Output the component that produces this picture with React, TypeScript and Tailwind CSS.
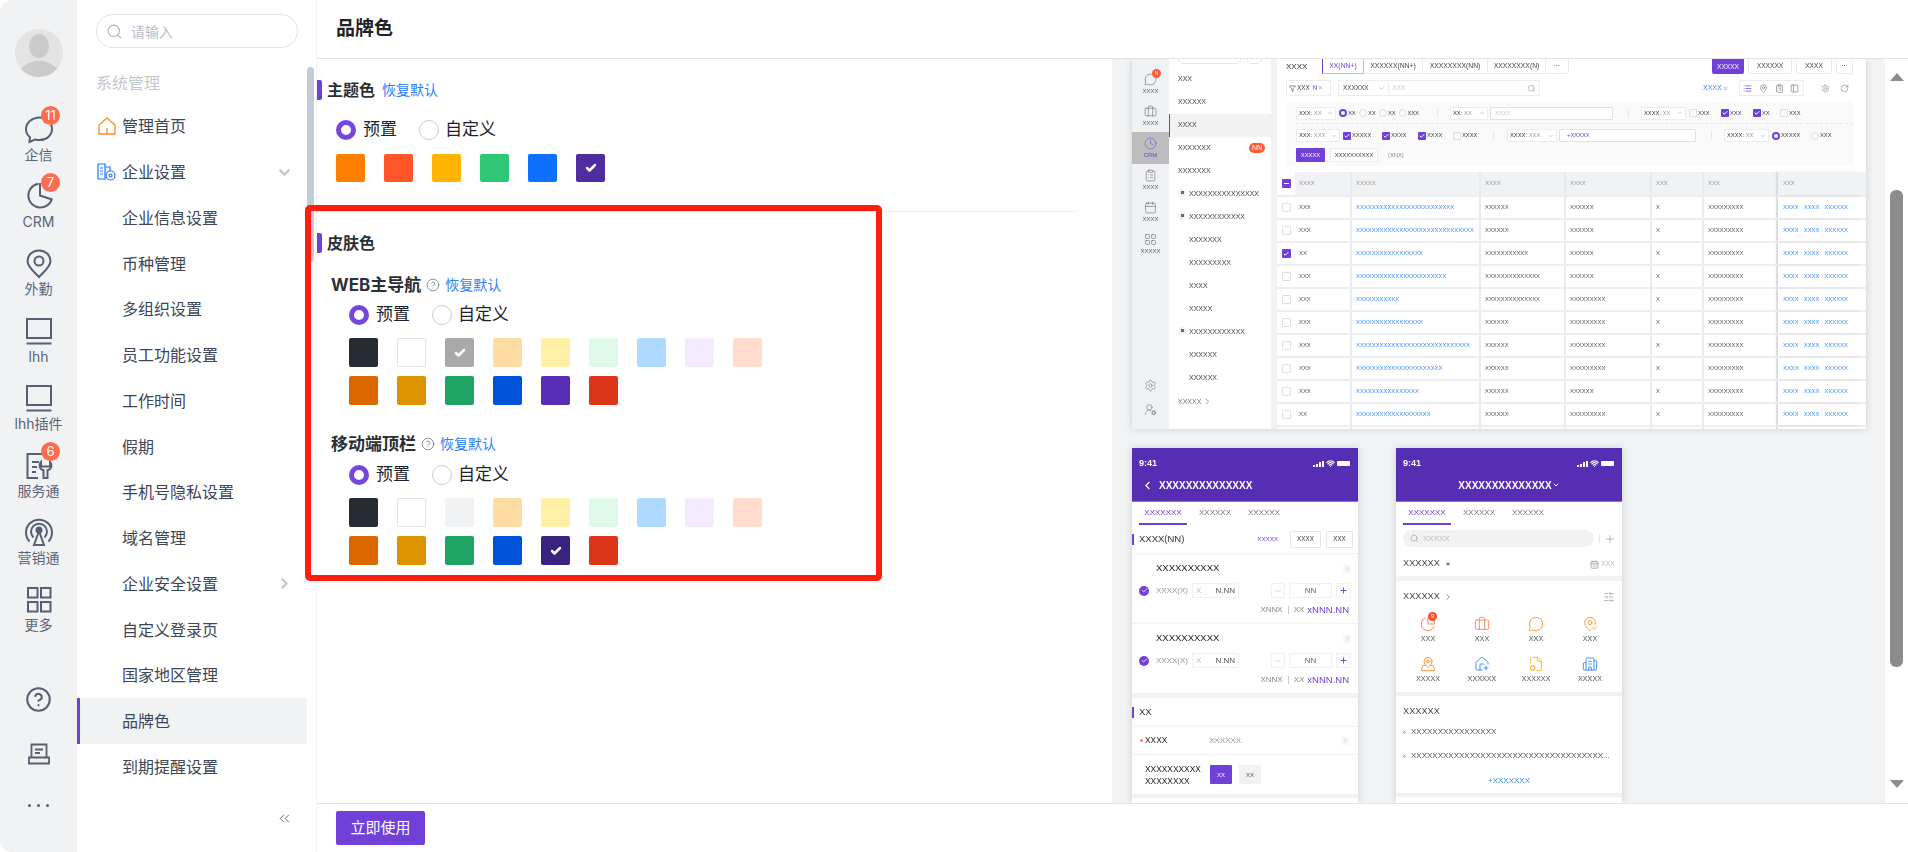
import {
  Briefcase, Building2, Calendar, CalendarDays, Check, ChartPie, ChevronDown, ChevronLeft, ChevronRight, ChevronsDown, ChevronsLeft,
  CircleHelp, ClipboardList, Clock, FileCog, Filter, HousePlus, LayoutGrid, List, MapPin, MapPinCheck, MapPinned,
  MessageCircle, Minus, PanelLeft, Plus, RotateCw, Search, Settings, SlidersHorizontal, UserRoundCog, Wifi,
} from 'lucide-react';

const railStroke = '#565f73';

function ChatIcon() {
  return (
    <svg width="30" height="30" viewBox="0 0 30 30" fill="none" stroke={railStroke} strokeWidth="2">
      <path d="M15.500 2.500C8.500 2.500 2 7.500 2 14c0 3.400 1.600 6.300 4 8.300l-.5 4.700 5.600-2.500c1.400.4 2.900.6 4.400.6 7 0 12.500-4.800 12.500-11C28 7.500 22.500 2.500 15.500 2.500z" />
    </svg>
  );
}
function PieIcon() {
  return (
    <svg width="30" height="30" viewBox="0 0 30 30" fill="none" stroke={railStroke} strokeWidth="2">
      <path d="M14.500 1.700a12 12 0 1 0 13.500 14.800" />
      <path d="M16 1v12.500l12 4" />
    </svg>
  );
}
function PinIcon() {
  return (
    <svg width="30" height="30" viewBox="0 0 30 30" fill="none" stroke={railStroke} strokeWidth="2">
      <path d="M15 1.500C8.500 1.500 3.500 6.200 3.500 12c0 6 6.700 10.800 11.500 16 4.800-5.200 11.500-10 11.500-16 0-5.800-5-10.500-11.500-10.500z" />
      <circle cx="15" cy="12" r="4.500" />
    </svg>
  );
}
function ScreenIcon() {
  return (
    <svg width="30" height="30" viewBox="0 0 30 30" fill="none" stroke={railStroke} strokeWidth="2">
      <rect x="3" y="2" width="24" height="19" />
      <path d="M2.500 26.500h25" />
    </svg>
  );
}
function ServiceIcon() {
  return (
    <svg width="30" height="30" viewBox="0 0 30 30" fill="none" stroke={railStroke} strokeWidth="2">
      <path d="M19 3H3.500v24H14" />
      <path d="M8 11h7M8 16h5M8 21h4" />
      <path d="M17 11c-1.500 1.500-2 4.500-.5 6.500 1 1 2 1.500 3 1.800V27h4v-7.700c1-.3 2-.8 3-1.800 1.500-2 1-5-.5-6.500v4.500h-3.500h-2L17 15.500z" />
    </svg>
  );
}
function BroadcastIcon() {
  return (
    <svg width="30" height="30" viewBox="0 0 30 30" fill="none" stroke={railStroke} strokeWidth="2">
      <path d="M5.500 23.500a13 13 0 1 1 19 0" />
      <path d="M9.500 19.500a8 8 0 1 1 11 0" />
      <circle cx="15" cy="12" r="2.500" fill={railStroke} />
      <path d="M15 13l-5 14h10z" />
    </svg>
  );
}
function MoreIcon() {
  return (
    <svg width="30" height="30" viewBox="0 0 30 30" fill="none" stroke={railStroke} strokeWidth="2">
      <rect x="4" y="3" width="9.500" height="9.500" />
      <rect x="17" y="3" width="9.500" height="9.500" />
      <rect x="4" y="17" width="9.500" height="9.500" />
      <rect x="17" y="17" width="9.500" height="9.500" />
    </svg>
  );
}
function TrayIcon() {
  return (
    <svg width="24" height="24" viewBox="0 0 24 24" fill="none" stroke={railStroke} strokeWidth="1.800">
      <path d="M4.500 15V2.500h15V15" />
      <path d="M8 7.500h8M8 11h5" />
      <path d="M2 15.500h20v6H2z" />
    </svg>
  );
}
function HomeIcon() {
  return (
    <svg width="18" height="18" viewBox="0 0 18 18" fill="none" stroke="#ff8a1f" strokeWidth="1.300">
      <path d="M9 1 1 8v9h16V8L9 1z" />
      <path d="M9 11v6" />
    </svg>
  );
}
function BizIcon() {
  return (
    <svg width="19" height="18" viewBox="0 0 19 18" fill="none" stroke="#1677ff" strokeWidth="1.200">
      <path d="M8 16H1V1h7v15zM8 4h5v4" />
      <path d="M3 5h3M3 8h3M3 11h3" />
      <circle cx="13.500" cy="12.500" r="4.500" />
      <circle cx="13.500" cy="12.500" r="1.500" />
    </svg>
  );
}

const railItems = [
  { label: '企信', icon: <ChatIcon />, badge: '11' },
  { label: 'CRM', icon: <PieIcon />, badge: '7' },
  { label: '外勤', icon: <PinIcon /> },
  { label: 'lhh', icon: <ScreenIcon /> },
  { label: 'lhh插件', icon: <ScreenIcon /> },
  { label: '服务通', icon: <ServiceIcon />, badge: '6' },
  { label: '营销通', icon: <BroadcastIcon /> },
  { label: '更多', icon: <MoreIcon /> },
];

const menuItems = [
  '企业信息设置', '币种管理', '多组织设置', '员工功能设置', '工作时间', '假期', '手机号隐私设置', '域名管理',
];

function Rail() {
  return (
    <div className="flex h-full w-[77px] shrink-0 flex-col items-center rounded-l-[12px] bg-[#f1f2f4]">
      <div className="mt-[29px] h-[48px] w-[48px] overflow-hidden rounded-full bg-[#e4e4e4]">
        <svg width="48" height="48" viewBox="0 0 48 48" fill="#cbcbcb">
          <ellipse cx="24" cy="17" rx="10" ry="12" />
          <path d="M3 48c0-10 9-13 16-16h10c7 3 16 6 16 16z" />
        </svg>
      </div>
      <div className="mt-[38px] flex w-full flex-col">
        {railItems.map((item) => (
          <div key={item.label} className="relative flex h-[67.2px] flex-col items-center">
            <div className="h-[30px]">{item.icon}</div>
            <span className="text-[14px] leading-[20px] text-[#5a6478]">{item.label}</span>
            {item.badge && (
              <span className="absolute left-[41px] top-[-9px] flex h-[19px] w-[19px] items-center justify-center rounded-full bg-[#ff6b4f] text-[13px] leading-none text-white">
                {item.badge}
              </span>
            )}
          </div>
        ))}
      </div>
      <div className="mt-[20px] flex w-full flex-col items-center">
        <div className="flex h-[54px] items-center"><CircleHelp size={27} color={railStroke} strokeWidth={1.800} /></div>
        <div className="flex h-[54px] items-center"><TrayIcon /></div>
        <div className="flex h-[50px] items-center gap-[6px]">
          <i className="h-[3px] w-[3px] rounded-full bg-[#565f73]" />
          <i className="h-[3px] w-[3px] rounded-full bg-[#565f73]" />
          <i className="h-[3px] w-[3px] rounded-full bg-[#565f73]" />
        </div>
      </div>
    </div>
  );
}

function MenuRow({ text, icon, active, arrow }: { text: string; icon?: React.ReactNode; active?: boolean; arrow?: React.ReactNode }) {
  return (
    <div className={`flex h-[45.75px] items-center border-l-[3px] pr-[14px] ${active ? 'border-[#7040d8] bg-[#f1f2f4]' : 'border-transparent'}`}>
      <div className="flex w-[42px] justify-end pr-[6px]">{icon}</div>
      <span className="flex-1 text-[16px] text-[#3d4559]">{text}</span>
      {arrow}
    </div>
  );
}

function Sidebar() {
  return (
    <div className="flex h-full w-[230px] shrink-0 flex-col">
      <div className="ml-[19px] mt-[14px] flex h-[34px] w-[202px] items-center rounded-full border border-[#dfe2ea] pl-[9px]">
        <Search size={17} color="#a9b0bd" strokeWidth={1.500} />
        <span className="ml-[8px] text-[14px] text-[#b8bcc6]">请输入</span>
      </div>
      <div className="ml-[19px] mt-[23px] text-[16px] leading-[24px] text-[#c4c7ce]">系统管理</div>
      <div className="mt-[8.500px] flex flex-col">
        <MenuRow text="管理首页" icon={<HomeIcon />} />
        <MenuRow text="企业设置" icon={<BizIcon />} arrow={<ChevronDown size={17} color="#c1c4cc" strokeWidth={3} />} />
        {menuItems.map((m) => <MenuRow key={m} text={m} />)}
        <MenuRow text="企业安全设置" arrow={<ChevronRight size={17} color="#c1c4cc" strokeWidth={3} />} />
        <MenuRow text="自定义登录页" />
        <MenuRow text="国家地区管理" />
        <MenuRow text="品牌色" active />
        <MenuRow text="到期提醒设置" />
      </div>
      <div className="mt-[20px] flex justify-end pr-[14px]">
        <ChevronsLeft size={17} color="#5a6478" strokeWidth={1.300} />
      </div>
    </div>
  );
}

function SectionTitle({ title, link }: { title: string; link?: boolean }) {
  return (
    <div className="flex h-[20px] items-center">
      <i className="h-[20px] w-[5px] rounded-r-[2px] bg-[#7040d8]" />
      <span className="ml-[5px] text-[16px] font-bold leading-[20px] text-[#2b2f36]">{title}</span>
      {link && <span className="ml-[7px] text-[14px] leading-[20px] text-[#2a7fff]">恢复默认</span>}
    </div>
  );
}

function RadioRow({ className }: { className: string }) {
  return (
    <div className={`flex h-[20px] items-center text-[17px] text-[#1f2329] ${className}`}>
      <i className="h-[20px] w-[20px] rounded-full border-[5px] border-[#7446dd] bg-white" />
      <span className="ml-[7px]">预置</span>
      <i className="ml-[22px] h-[20px] w-[20px] rounded-full border border-[#c9ccd6] bg-white" />
      <span className="ml-[6px]">自定义</span>
    </div>
  );
}

function Swatch({ color, selected, tall }: { color: string; selected?: boolean; tall?: boolean }) {
  return (
    <div
      className={`flex w-[29px] items-center justify-center rounded-[2px] ${tall ? 'h-[29px]' : 'h-[28px]'} ${color === '#ffffff' ? 'border border-[#dfe2ea]' : ''}`}
      style={{ backgroundColor: color }}
    >
      {selected && <Check size={12} color="#ffffff" strokeWidth={5} />}
    </div>
  );
}

const lightRow = ['#ffdca3', '#fff0a6', '#def9e8', '#b0d9ff', '#f4ecfe', '#ffdccd'];
const darkRow = ['#d96800', '#db9400', '#1fa463', '#0052d9'];

function SkinBlock({ title, third, thirdOn, purple, purpleOn, radioGap }: { title: string; third: string; thirdOn?: boolean; purple: string; purpleOn?: boolean; radioGap: string }) {
  return (
    <div>
      <div className="flex h-[20px] items-center pl-[14px]">
        <span className="text-[17px] font-bold leading-[20px] text-[#2b2f36]">{title}</span>
        <CircleHelp className="ml-[5px]" size={14} color="#7b8394" strokeWidth={1.500} />
        <span className="ml-[5px] text-[14px] leading-[20px] text-[#2a7fff]">恢复默认</span>
      </div>
      <RadioRow className={`${radioGap} pl-[32px]`} />
      <div className="ml-[32px] mt-[13px] grid grid-cols-[repeat(9,29px)] gap-x-[19px] gap-y-[9px]">
        <Swatch tall color="#272b33" />
        <Swatch tall color="#ffffff" />
        <Swatch tall color={third} selected={thirdOn} />
        {lightRow.map((c) => <Swatch tall key={c} color={c} />)}
        {darkRow.map((c) => <Swatch tall key={c} color={c} />)}
        <Swatch tall color={purple} selected={purpleOn} />
        <Swatch tall color="#db3618" />
      </div>
    </div>
  );
}

function Settings_() {
  return (
    <div className="w-[795px] shrink-0">
      <div className="mt-[21px]"><SectionTitle title="主题色" link /></div>
      <RadioRow className="mt-[20px] pl-[19px]" />
      <div className="ml-[19px] mt-[14px] flex gap-[19px]">
        {['#ff8000', '#ff5529', '#ffb400', '#2ec775', '#0f6fff'].map((c) => <Swatch key={c} color={c} />)}
        <Swatch color="#4f2d9e" selected />
      </div>
      <div className="mt-[29px] h-px w-[760px] bg-[#eceef2]" />
      <div className="mt-[21px]"><SectionTitle title="皮肤色" /></div>
      <div className="mt-[22px]">
        <SkinBlock title="WEB主导航" third="#a8a9ab" thirdOn purple="#572eb5" radioGap="mt-[10px]" />
      </div>
      <div className="mt-[29px]">
        <SkinBlock title="移动端顶栏" third="#f1f2f4" purple="#3a2280" purpleOn radioGap="mt-[11px]" />
      </div>
    </div>
  );
}

/* ---------- preview: desktop ---------- */

function MiniRailItem({ icon, label, active, badge }: { icon: React.ReactNode; label: string; active?: boolean; badge?: boolean }) {
  return (
    <div className={`relative flex h-[32px] flex-col items-center justify-center ${active ? 'bg-[#bdbdbd] text-[#7040d8]' : 'text-[#555b68]'}`}>
      {icon}
      <span className="text-[6px] leading-[10px]">{label}</span>
      {badge && <i className="absolute left-[20px] top-[1px] flex h-[9px] w-[9px] items-center justify-center rounded-full bg-[#ff5a36] text-[5px] not-italic text-white">N</i>}
    </div>
  );
}

const listRows: [string, number, string?][] = [
  ['XXX', 0], ['XXXXXX', 0], ['XXXX', 0, 'active'], ['XXXXXXX', 0, 'badge'], ['XXXXXXX', 0],
  ['XXXXXXXXXXXXXXX', 1, 'right'], ['XXXXXXXXXXXX', 1, 'down'], ['XXXXXXX', 1], ['XXXXXXXXX', 1], ['XXXX', 1], ['XXXXX', 1],
  ['XXXXXXXXXXXX', 1, 'down'], ['XXXXXX', 1], ['XXXXXX', 1],
];

function MiniList() {
  return (
    <div className="flex w-[102px] shrink-0 flex-col bg-white">
      <div className="ml-[9px] flex h-[5px] gap-[6px]">
        <i className="h-[5px] w-[63px] rounded-b-full border-x border-b border-[#e3e5ea]" />
        <i className="h-[5px] w-[15px] rounded-b-full border-x border-b border-[#e3e5ea]" />
      </div>
      <div className="mt-[3.500px]">
        {listRows.map(([t, level, kind], i) => (
          <div
            key={i}
            className={`flex h-[23px] items-center text-[7px] text-[#444] ${kind === 'active' ? 'border-l border-[#7040d8] bg-[#f1f2f4] pl-[8px]' : level ? 'pl-[20px]' : 'pl-[9px]'}`}
          >
            <span className="relative">
              {(kind === 'right' || kind === 'down') && (
                <i className="absolute left-[-11px] top-[0px] flex h-[8px] w-[8px] items-center justify-center rounded-full bg-[#edf0f6]">
                  <i className="block h-[3px] w-[3px] bg-[#667]" />
                </i>
              )}
              {t}
            </span>
            {kind === 'badge' && <i className="ml-auto mr-[6px] rounded-full bg-[#ff5a36] px-[3px] text-[7px] not-italic leading-[10px] text-white">NN</i>}
          </div>
        ))}
      </div>
      <div className="mt-[7px] flex items-center pl-[9px] text-[7px] text-[#777]">
        XXXXX<ChevronRight className="ml-[2px]" size={9} />
      </div>
    </div>
  );
}

function Tab({ text, w, active, last }: { text: string; w: string; active?: boolean; last?: boolean }) {
  return (
    <div className={`flex h-[15px] items-center justify-center border-b border-r text-[6.800px] ${w} ${last ? 'rounded-br-[3px]' : ''} ${active ? 'border-[#c9b6f2] border-l border-l-[#7040d8] text-[#7040d8]' : 'border-[#e8e9ee] text-[#444]'}`}>
      {text}
    </div>
  );
}

function TopBtn({ text, w, on }: { text: string; w: string; on?: boolean }) {
  return (
    <div className={`flex h-[15px] items-center justify-center rounded-b-[2px] text-[6.600px] ${w} ${on ? 'bg-[#7040d8] text-white' : 'border-x border-b border-[#e8e9ee] text-[#444]'}`}>
      {text}
    </div>
  );
}

function Sel({ label, value, w }: { label: string; value: string; w: string }) {
  return (
    <div className={`flex h-[13px] shrink-0 items-center justify-between border border-[#ececef] bg-white px-[2px] text-[5.800px] ${w}`}>
      <span className="text-[#333]">{label} <span className="text-[#999]">{value}</span></span>
      <ChevronDown size={6} color="#999" />
    </div>
  );
}

function Chk({ on, text, w }: { on?: boolean; text: string; w: string }) {
  return (
    <div className={`flex shrink-0 items-center text-[5.800px] text-[#444] ${w}`}>
      <i className={`mr-[1px] flex h-[8px] w-[8px] items-center justify-center rounded-[1px] ${on ? 'bg-[#7040d8]' : 'border border-[#dcdfe6]'}`}>
        {on && <Check size={6} color="#fff" strokeWidth={4} />}
      </i>
      {text}
    </div>
  );
}

function Rad({ on, text, w }: { on?: boolean; text: string; w: string }) {
  return (
    <div className={`flex shrink-0 items-center text-[5.800px] text-[#444] ${w}`}>
      <i className={`mr-[1px] h-[8px] w-[8px] rounded-full ${on ? 'border-2 border-[#7040d8]' : 'border border-[#dcdfe6]'}`} />
      {text}
    </div>
  );
}

const Sep = ({ className }: { className: string }) => <i className={`h-[9px] w-px shrink-0 bg-[#e6e7eb] ${className}`} />;

const tableRows = [
  ['XXX', 25, 'XXXXXX', 'XXXXXX'],
  ['XXX', 30, 'XXXXXX', 'XXXXXX'],
  ['XX', 17, 'XXXXXXXXXXX', 'XXXXXX'],
  ['XXX', 23, 'XXXXXXXXXXXXXX', 'XXXXXX'],
  ['XXX', 11, 'XXXXXXXXXXXXXX', 'XXXXXXXXX'],
  ['XXX', 17, 'XXXXXX', 'XXXXXXXXX'],
  ['XXX', 29, 'XXXXXX', 'XXXXXXXXX'],
  ['XXX', 22, 'XXXXXX', 'XXXXXXXXX'],
  ['XXX', 16, 'XXXXXX', 'XXXXXX'],
  ['XX', 19, 'XXXXXX', 'XXXXXXXXX'],
  ['', 0, '', ''],
] as [string, number, string, string][];

const tableGrid = 'grid grid-cols-[18px_57px_129px_85px_86px_52px_74px_84px] items-stretch';
const cell = 'flex items-center border-r-2 border-[#e9eaee] pl-[4px]';

function MiniTable() {
  return (
    <div className="mt-[6px] text-[5.900px]">
      <div className={`${tableGrid} h-[23px] bg-[#f1f2f4] text-[#999]`}>
        <div className="flex items-center justify-center bg-white">
          <i className="flex h-[9px] w-[9px] items-center justify-center rounded-[1px] bg-[#7040d8]"><i className="h-px w-[5px] bg-white" /></i>
        </div>
        {['XXXX', 'XXXXX', 'XXXX', 'XXXX', 'XXX', 'XXX'].map((t, i) => <div key={i} className={cell}>{t}</div>)}
        <div className="flex items-center pl-[5px] shadow-[-2px_0_2px_rgba(0,0,0,0.08)]">XXX</div>
      </div>
      {tableRows.map((r, i) => (
        <div key={i} className={`${tableGrid} h-[23px] border-t-2 border-[#eceef1] text-[#555]`}>
          <div className="flex items-center justify-center">
            <i className={`flex h-[9px] w-[9px] items-center justify-center rounded-[1px] ${i === 2 ? 'bg-[#7040d8]' : 'border border-[#dcdfe6]'}`}>
              {i === 2 && <Check size={6} color="#fff" strokeWidth={4} />}
            </i>
          </div>
          <div className={cell}>{r[0]}</div>
          <div className={`${cell} text-[#3b8bff]`}>{'X'.repeat(r[1])}</div>
          <div className={cell}>{r[2]}</div>
          <div className={cell}>{r[3]}</div>
          <div className={cell}>{r[0] && 'X'}</div>
          <div className={cell}>{r[0] && 'XXXXXXXXX'}</div>
          <div className="flex items-center gap-[5px] pl-[5px] text-[#3b8bff] shadow-[-2px_0_2px_rgba(0,0,0,0.08)]">
            {r[0] && <><span>XXXX</span><span>XXXX</span><span>XXXXXX</span></>}
          </div>
        </div>
      ))}
    </div>
  );
}

function DesktopPreview() {
  return (
    <div className="ml-[20px] flex h-[370px] w-[734px] shrink-0 overflow-hidden bg-white shadow-[0_0_8px_rgba(0,0,0,0.14)]">
      <div className="flex w-[37px] shrink-0 flex-col bg-[#f1f2f4] pt-[9px]">
        <MiniRailItem icon={<MessageCircle size={13} strokeWidth={1} />} label="XXXX" badge />
        <MiniRailItem icon={<Briefcase size={13} strokeWidth={1} />} label="XXXX" />
        <MiniRailItem active icon={<Clock size={13} strokeWidth={1} />} label="CRM" />
        <MiniRailItem icon={<ClipboardList size={13} strokeWidth={1} />} label="XXXX" />
        <MiniRailItem icon={<Calendar size={13} strokeWidth={1} />} label="XXXX" />
        <MiniRailItem icon={<LayoutGrid size={13} strokeWidth={1} />} label="XXXXX" />
        <div className="mt-auto mb-[13px] flex flex-col items-center gap-[11px] text-[#666]">
          <Settings size={13} strokeWidth={1} />
          <UserRoundCog size={13} strokeWidth={1} />
        </div>
      </div>
      <MiniList />
      <div className="w-[6px] shrink-0 bg-[#f1f2f4]" />
      <div className="min-w-0 flex-1">
        <div className="flex h-[15px] items-start pl-[9px]">
          <span className="w-[36px] text-[8px] leading-[15px] text-[#333]">XXXX</span>
          <Tab text="XX(NN+)" w="w-[42px]" active />
          <Tab text="XXXXXX(NN+)" w="w-[59px]" />
          <Tab text="XXXXXXXX(NN)" w="w-[65px]" />
          <Tab text="XXXXXXXX(N)" w="w-[58px]" />
          <Tab text="···" w="w-[23px]" last />
          <div className="ml-auto mr-[13px] flex gap-[4px]">
            <TopBtn text="XXXXX" w="w-[32px]" on />
            <TopBtn text="XXXXXX" w="w-[44px]" />
            <TopBtn text="XXXX" w="w-[36px]" />
            <TopBtn text="···" w="w-[17px]" />
          </div>
        </div>
        <div className="mt-[6px] flex h-[16px] items-center pl-[9px] text-[6.400px]">
          <div className="flex h-[16px] w-[45px] items-center gap-[1px] border border-[#ececef] pl-[2px] text-[#444]">
            <Filter size={7} />XXX <span className="ml-[2px] text-[#7040d8]">N</span><span className="text-[#999]">×</span>
          </div>
          <div className="ml-[7px] flex h-[16px] w-[202px] items-center border border-[#ececef] pl-[4px] text-[#444]">
            XXXXXX<ChevronDown className="ml-[9px]" size={7} color="#999" />
            <i className="ml-[3px] h-[9px] w-px bg-[#e6e7eb]" />
            <span className="ml-[4px] flex-1 text-[#ccc]">XXX</span>
            <Search className="mr-[3px]" size={9} color="#aaa" />
          </div>
          <span className="ml-[163px] flex items-center text-[7px] text-[#3b8bff]">XXXX<ChevronsDown size={7} /></span>
          <div className="ml-[10px] flex h-[16px] w-[65px] items-center justify-around border border-[#ececef] text-[#888]">
            <List size={9} color="#7040d8" /><MapPin size={9} /><ClipboardList size={9} /><PanelLeft size={9} />
          </div>
          <Settings className="ml-[17px]" size={9} color="#999" />
          <RotateCw className="ml-[10px]" size={9} color="#999" />
        </div>
        <div className="ml-[9px] mt-[6px] h-[64px] w-[567px] bg-[#fafafa] pl-[10px] pt-[3px]">
          <div className="flex h-[19px] items-center border-b border-dashed border-[#e8e8ea] pb-[2px]">
            <Sel label="XXX:" value="XX" w="w-[40px]" />
            <div className="ml-[3px] flex w-[98px]">
              <Rad on text="XX" w="w-[20px]" /><Rad text="XX" w="w-[20px]" /><Rad text="XX" w="w-[20px]" /><Rad text="XXX" w="w-[20px]" />
            </div>
            <Sep className="mr-[12px]" />
            <Sel label="XX:" value="XX" w="w-[38px]" />
            <i className="ml-[2px] h-[13px] w-[123px] shrink-0 rounded-[1px] border border-[#dfe1e6] bg-white pl-[4px] text-[5.800px] not-italic leading-[11px] text-[#ccc]">XXXX</i>
            <Sep className="ml-[15px] mr-[12px]" />
            <Sel label="XXXX:" value="XX" w="w-[45px]" />
            <div className="ml-[3px] flex">
              <Chk text="XXX" w="w-[32px]" /><Chk on text="XXX" w="w-[32px]" /><Chk on text="XX" w="w-[27px]" /><Chk text="XXX" w="w-[27px]" />
            </div>
          </div>
          <div className="mt-[4px] flex h-[15px] items-center">
            <Sel label="XXX:" value="XXX" w="w-[44px]" />
            <div className="ml-[3px] flex w-[150px]">
              <Chk on text="XXXXX" w="w-[39px]" /><Chk on text="XXXX" w="w-[36px]" /><Chk on text="XXXX" w="w-[35px]" /><Chk text="XXXX" w="w-[36px]" />
            </div>
            <Sep className="mr-[13px]" />
            <Sel label="XXXX:" value="XXX" w="w-[50px]" />
            <i className="ml-[2px] h-[13px] w-[137px] shrink-0 rounded-[1px] border border-[#dfe1e6] bg-white pl-[7px] text-[5.800px] not-italic leading-[11px] text-[#7040d8]">+XXXXX</i>
            <Sep className="ml-[15px] mr-[12px]" />
            <Sel label="XXXX:" value="XX" w="w-[45px]" />
            <div className="ml-[3px] flex"><Rad on text="XXXXX" w="w-[39px]" /><Rad text="XXX" w="w-[27px]" /></div>
          </div>
          <div className="mt-[5px] flex h-[14px] items-center text-[5.800px]">
            <span className="flex h-[14px] w-[29px] items-center justify-center rounded-[1px] bg-[#7040d8] text-white">XXXXX</span>
            <span className="ml-[5px] flex h-[14px] w-[48px] items-center justify-center border border-[#ececef] bg-white text-[#444]">XXXXXXXXXX</span>
            <span className="ml-[10px] text-[#888]">(XNX)</span>
          </div>
        </div>
        <MiniTable />
      </div>
    </div>
  );
}

/* ---------- preview: phones ---------- */

function PhoneHeader({ back }: { back?: boolean }) {
  return (
    <div className="h-[54px] border-b border-[#8a6dcc] bg-[#552eb3] text-white">
      <div className="flex h-[30px] items-center justify-between pl-[7px] pr-[8px] pt-[1px]">
        <span className="text-[9px] font-bold">9:41</span>
        <div className="flex items-center gap-[2px]">
          <div className="flex items-end gap-px">
            <i className="h-[2px] w-[2px] bg-white" /><i className="h-[3px] w-[2px] bg-white" /><i className="h-[5px] w-[2px] bg-white" /><i className="h-[6px] w-[2px] bg-white" />
          </div>
          <Wifi size={9} strokeWidth={3} />
          <i className="h-[5px] w-[13px] rounded-[1px] bg-white" />
        </div>
      </div>
      {back ? (
        <div className="flex h-[14px] items-center pl-[9px] text-[10px] font-bold">
          <ChevronLeft size={13} strokeWidth={2} />
          <span className="ml-[5px]">XXXXXXXXXXXXXX</span>
        </div>
      ) : (
        <div className="flex h-[14px] items-center justify-center text-[10px] font-bold">
          XXXXXXXXXXXXXX<ChevronDown size={8} strokeWidth={3} />
        </div>
      )}
    </div>
  );
}

function PhoneTabs() {
  return (
    <div className="flex h-[23px] pl-[7px] text-[8px] leading-[21px] text-[#777]">
      <span className="w-[48px] border-b-2 border-[#7040d8] text-center text-[#7040d8]">XXXXXXX</span>
      <span className="ml-[12px]">XXXXXX</span>
      <span className="ml-[17px]">XXXXXX</span>
    </div>
  );
}

const Gap = ({ h }: { h: string }) => <div className={`${h} bg-[#f1f2f4]`} />;

function OrderItem() {
  return (
    <div className="h-[70px] border-b border-[#f1f2f4] pl-[7px] pr-[7px]">
      <div className="flex h-[29px] items-center pl-[17px] text-[9.500px] text-[#222]">
        XXXXXXXXXX
        <i className="ml-auto flex h-[8px] w-[8px] items-center justify-center bg-[#f7f7f8]"><ChevronRight size={7} color="#bbb" /></i>
      </div>
      <div className="flex h-[15px] items-center text-[8px] text-[#999]">
        <i className="flex h-[10px] w-[10px] items-center justify-center rounded-full bg-[#7040d8]"><Check size={7} color="#fff" strokeWidth={3} /></i>
        <span className="ml-[7px] w-[36px]">XXXX(X)</span>
        <div className="flex h-[15px] w-[47px] items-center justify-between border border-[#f0f0f2] px-[3px]">
          <span className="text-[#bbb]">X</span><span className="text-[#555]">N.NN</span>
        </div>
        <div className="ml-auto flex items-center gap-[4px]">
          <i className="flex h-[15px] w-[14px] items-center justify-center border border-[#f0f0f2]"><Minus size={8} color="#bbb" /></i>
          <i className="flex h-[15px] w-[43px] items-center justify-center border border-[#f0f0f2] not-italic text-[#666]">NN</i>
          <i className="flex h-[15px] w-[15px] items-center justify-center border border-[#f0f0f2]"><Plus size={9} color="#7040d8" strokeWidth={2.500} /></i>
        </div>
      </div>
      <div className="mt-[5px] flex h-[14px] items-center justify-end pr-[2px] text-[8px] text-[#888]">
        XNNX<i className="mx-[5px] h-[8px] w-px bg-[#ccc]" />XX<span className="ml-[3px] text-[9.500px] text-[#7040d8]">xNNN.NN</span>
      </div>
    </div>
  );
}

function PhoneOrder() {
  return (
    <div className="h-[356px] w-[226px] shrink-0 overflow-hidden bg-white shadow-[0_0_8px_rgba(0,0,0,0.14)]">
      <PhoneHeader back />
      <PhoneTabs />
      <div className="flex h-[29px] items-center border-b border-[#f1f2f4] pr-[5px] text-[9.500px] text-[#333]">
        <i className="h-[11px] w-[2px] bg-[#7040d8]" />
        <span className="ml-[5px]">XXXX(NN)</span>
        <span className="ml-auto text-[6.200px] text-[#7040d8]">XXXXX</span>
        <span className="ml-[12px] flex h-[17px] w-[31px] items-center justify-center rounded-[1px] border border-[#e6e7eb] text-[6.300px]">XXXX</span>
        <span className="ml-[5px] flex h-[17px] w-[27px] items-center justify-center rounded-[1px] border border-[#e6e7eb] text-[6.300px]">XXX</span>
      </div>
      <OrderItem />
      <OrderItem />
      <Gap h="h-[4px]" />
      <div className="flex h-[29px] items-center border-b border-[#f1f2f4] text-[9.500px] text-[#333]">
        <i className="h-[11px] w-[2px] bg-[#7040d8]" /><span className="ml-[5px]">XX</span>
      </div>
      <div className="flex h-[28px] items-center border-b border-[#f1f2f4] pl-[8px] pr-[9px] text-[8.400px]">
        <i className="h-[3px] w-[3px] rounded-full bg-[#ff7a45]" />
        <span className="ml-[2px] w-[64px] text-[#222]">XXXX</span>
        <span className="text-[8px] text-[#999]">XXXXXX</span>
        <i className="ml-auto flex h-[8px] w-[8px] items-center justify-center bg-[#f7f7f8]"><ChevronRight size={7} color="#bbb" /></i>
      </div>
      <div className="flex h-[39px] items-center pl-[13px] text-[8.400px] leading-[12px] text-[#222]">
        <div className="w-[65px]">XXXXXXXXXX<br />XXXXXXXX</div>
        <span className="flex h-[19px] w-[22px] items-center justify-center rounded-[1px] bg-[#7040d8] text-[6px] text-white">XX</span>
        <span className="ml-[7px] flex h-[19px] w-[22px] items-center justify-center rounded-[1px] bg-[#f1f2f4] text-[6px] text-[#555]">XX</span>
      </div>
      <Gap h="h-[4px]" />
    </div>
  );
}

const appIcons = [
  { icon: ChartPie, label: 'XXX', color: '#ff6a3d', badge: true },
  { icon: Briefcase, label: 'XXX', color: '#ff7a59' },
  { icon: MessageCircle, label: 'XXX', color: '#ff8a1f' },
  { icon: MapPinCheck, label: 'XXX', color: '#ff8a1f' },
  { icon: MapPinned, label: 'XXXXX', color: '#ff8a1f' },
  { icon: HousePlus, label: 'XXXXXX', color: '#2a7fff' },
  { icon: FileCog, label: 'XXXXXX', color: '#ffb400' },
  { icon: Building2, label: 'XXXXX', color: '#2a7fff' },
];

function PhoneHome() {
  return (
    <div className="ml-[38px] h-[356px] w-[226px] shrink-0 overflow-hidden bg-white shadow-[0_0_8px_rgba(0,0,0,0.14)]">
      <PhoneHeader />
      <PhoneTabs />
      <div className="flex h-[27px] items-center pl-[7px] pr-[6px]">
        <div className="flex h-[17px] w-[191px] items-center rounded-full bg-[#f1f2f4] pl-[7px] text-[8px] text-[#bbb]">
          <Search size={9} color="#aaa" /><span className="ml-[4px]">XXXXX</span>
        </div>
        <i className="ml-[5px] h-[9px] w-px bg-[#e6e7eb]" />
        <Plus className="ml-[4px]" size={12} color="#777" strokeWidth={1} />
      </div>
      <div className="flex h-[24px] items-center pl-[7px] pr-[7px] text-[9.200px] text-[#444]">
        XXXXXX<i className="ml-[6px] h-0 w-0 border-x-[2px] border-t-[3px] border-x-transparent border-t-[#666]" />
        <CalendarDays className="ml-auto" size={9} color="#999" />
        <span className="ml-[2px] text-[7px] text-[#bbb]">XXX</span>
      </div>
      <Gap h="h-[5px]" />
      <div className="flex h-[31px] items-center pl-[7px] pr-[7px] text-[9.200px] text-[#444]">
        XXXXXX<ChevronRight className="ml-[3px]" size={10} color="#777" />
        <SlidersHorizontal className="ml-auto" size={12} color="#777" strokeWidth={1} />
      </div>
      <div className="grid grid-cols-4 px-[5px]">
        {appIcons.map((a, i) => (
          <div key={i} className="relative flex h-[40px] flex-col items-center pt-[4px]">
            <a.icon size={16} color={a.color} strokeWidth={1.300} />
            <span className="mt-[2px] text-[7.200px] leading-[10px] text-[#555]">{a.label}</span>
            {a.badge && <i className="absolute left-[27px] top-[0px] flex h-[9px] w-[9px] items-center justify-center rounded-full bg-[#ff4d2e] text-[6px] not-italic text-white">9</i>}
          </div>
        ))}
      </div>
      <Gap h="h-[4px]" />
      <div className="flex h-[24px] items-end pb-[1px] pl-[7px] text-[9.200px] text-[#444]">XXXXXX</div>
      <div className="flex h-[24px] items-center pl-[7px] text-[8px] text-[#555]">
        <i className="h-[3px] w-[3px] rounded-full border border-[#999]" /><span className="ml-[5px]">XXXXXXXXXXXXXXXX</span>
      </div>
      <div className="flex h-[24px] items-center pl-[7px] text-[8px] text-[#555]">
        <i className="h-[3px] w-[3px] shrink-0 rounded-full border border-[#999]" />
        <span className="ml-[5px] whitespace-nowrap">XXXXXXXXXXXXXXXXXXXXXXXXXXXXXXXXXXXX...</span>
      </div>
      <div className="flex h-[25px] items-center justify-center text-[8px] text-[#3b8bff]">+XXXXXXX</div>
      <Gap h="h-[4px]" />
    </div>
  );
}

function PreviewScrollbar() {
  return (
    <div className="flex w-[23px] shrink-0 flex-col items-center bg-white pt-[14px]">
      <i className="h-0 w-0 border-x-[7px] border-b-[8px] border-x-transparent border-b-[#8c8c8c]" />
      <i className="mt-[109px] h-[477px] w-[13px] shrink-0 rounded-[6px] bg-[#8c8c8c]" />
      <i className="mt-[113px] h-0 w-0 border-x-[7px] border-t-[8px] border-x-transparent border-t-[#8c8c8c]" />
    </div>
  );
}

export default function App() {
  return (
    <div className="relative flex h-[852px] w-[1908px] overflow-hidden bg-white font-['Inter','Noto_Sans_CJK_SC',sans-serif]">
      <Rail />
      <Sidebar />
      <div className="w-[10px] shrink-0 pt-[67px]">
        <div className="h-[195px] w-[7px] rounded-[4px] bg-[#c3cbd6]" />
      </div>
      <div className="flex min-w-0 flex-1 flex-col shadow-[-1px_0_0_#f3f4f6]">
        <div className="flex h-[59px] shrink-0 items-center border-b border-[#e3e4e8] pl-[19px] text-[19px] font-bold text-[#1f2329]">
          品牌色
        </div>
        <div className="flex min-h-0 flex-1">
          <Settings_ />
          <div className="flex min-w-0 flex-1 flex-col overflow-hidden bg-[#f2f3f5] font-['Liberation_Sans',sans-serif] blur-[0.3px]">
            <DesktopPreview />
            <div className="ml-[20px] mt-[19px] flex">
              <PhoneOrder />
              <PhoneHome />
            </div>
          </div>
          <PreviewScrollbar />
        </div>
        <div className="h-[49px] shrink-0 border-t border-[#e3e4e8] pl-[19px] pt-[7px]">
          <div className="flex h-[34px] w-[89px] items-center justify-center rounded-[2px] bg-[#7040d8] text-[15px] text-white">立即使用</div>
        </div>
      </div>
      <div className="absolute left-[305px] top-[205px] h-[376px] w-[577px] rounded-[5px] border-[6px] border-[#ff1d10]" />
    </div>
  );
}
